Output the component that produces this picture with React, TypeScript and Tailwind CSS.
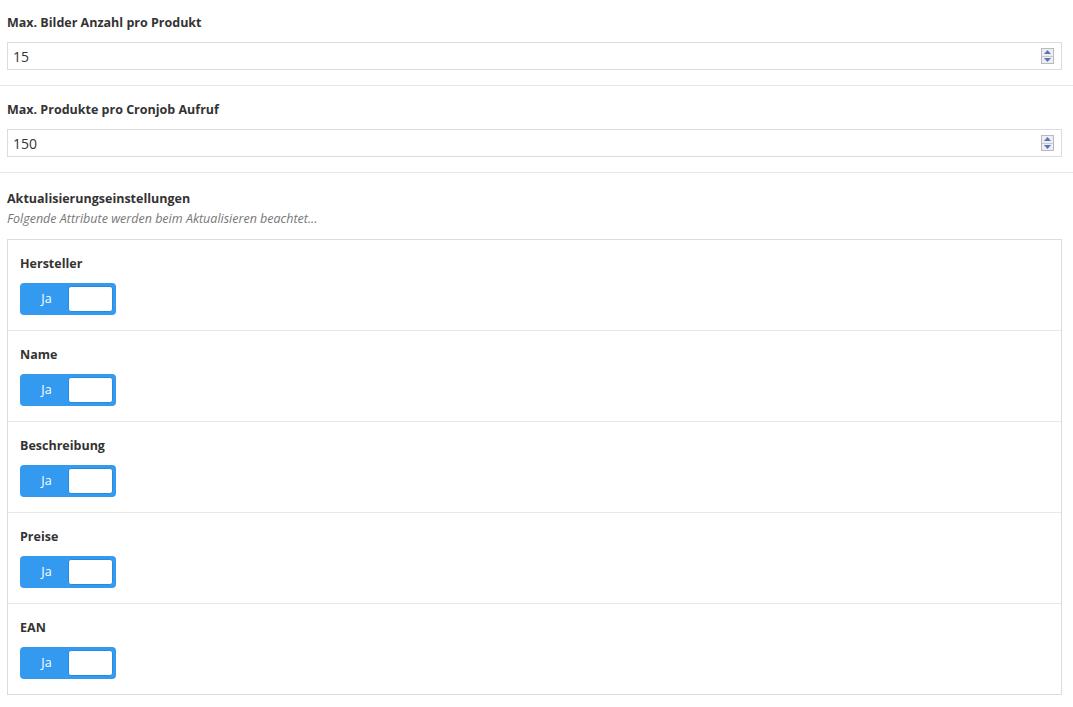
import React from "react";

const ATTRS = ["Hersteller", "Name", "Beschreibung", "Preise", "EAN"];

function Spinner() {
  return (
    <div className="flex flex-col w-[13px] h-[16px] border border-[#b9b9c4] bg-[#eceef2]">
      <div className="flex-1 flex items-center justify-center border-b border-[#c7c8d0]">
        <svg width="7" height="4" viewBox="0 0 7 4"><path d="M0 4 L3.5 0 L7 4 Z" fill="#5a74b4" /></svg>
      </div>
      <div className="flex-1 flex items-center justify-center">
        <svg width="7" height="4" viewBox="0 0 7 4"><path d="M0 0 L3.5 4 L7 0 Z" fill="#5a74b4" /></svg>
      </div>
    </div>
  );
}

function NumberField({ label, value }: { label: string; value: string }) {
  return (
    <div className="pt-[13px] pb-[15px] border-b border-[#e8e8e8]">
      <p className="px-[7px] text-[12.5px] leading-[20px] font-bold text-[#333]">{label}</p>
      <div className="mx-[7px] mr-[11px] mt-[9px] h-[28px] border border-[#dcdcdc] bg-white flex items-center pl-[5px] pr-[7px]">
        <span className="flex-1 text-[14px] text-[#333]">{value}</span>
        <Spinner />
      </div>
    </div>
  );
}

function Toggle() {
  return (
    <div className="w-[96px] h-[32px] rounded-[4px] bg-[#339af0] flex items-center p-[3px]">
      <span className="flex-1 text-center text-[12.5px] text-white pl-[2px]">Ja</span>
      <div className="w-[45px] h-[26px] bg-white rounded-[3px] border border-[#2a8ae0]" />
    </div>
  );
}

export default function App() {
  return (
    <div className="bg-white min-h-screen w-[1073px] font-['Open_Sans',sans-serif] text-[#333]">
      <NumberField label="Max. Bilder Anzahl pro Produkt" value="15" />
      <div className="pt-px">
        <NumberField label="Max. Produkte pro Cronjob Aufruf" value="150" />
      </div>

      <div className="pt-[16px] px-[7px] pr-[11px]">
        <p className="text-[12.5px] leading-[20px] font-bold">Aktualisierungseinstellungen</p>
        <p className="text-[12.5px] leading-[20px] italic text-[#777]">
          Folgende Attribute werden beim Aktualisieren beachtet...
        </p>
        <div className="mt-[10px] border border-[#dcdcdc]">
          {ATTRS.map((a, i) => (
            <div
              key={a}
              className={`px-[12px] pt-[14px] pb-[15px] ${i < ATTRS.length - 1 ? "border-b border-[#e8e8e8]" : ""}`}
            >
              <p className="text-[12.5px] leading-[20px] font-bold">{a}</p>
              <div className="mt-[9px]">
                <Toggle />
              </div>
            </div>
          ))}
        </div>
      </div>
    </div>
  );
}
